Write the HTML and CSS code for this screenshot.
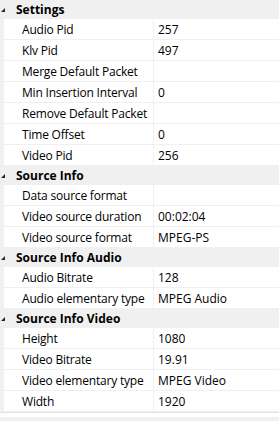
FILE: index.html
```html
<!DOCTYPE html>
<html lang="en">
  <head>
    <link rel="stylesheet" href="styles.css">
    <title>Properties</title>
  </head>
  <body>
    <div class="grid">
      <div class="category"><span class="arrow"></span>Settings</div>
      <div class="prop"><span class="name">Audio Pid</span><span class="value">257</span></div>
      <div class="prop"><span class="name">Klv Pid</span><span class="value">497</span></div>
      <div class="prop"><span class="name">Merge Default Packet</span><span class="value"></span></div>
      <div class="prop"><span class="name">Min Insertion Interval</span><span class="value">0</span></div>
      <div class="prop"><span class="name">Remove Default Packet</span><span class="value"></span></div>
      <div class="prop"><span class="name">Time Offset</span><span class="value">0</span></div>
      <div class="prop"><span class="name">Video Pid</span><span class="value">256</span></div>

      <div class="category"><span class="arrow"></span>Source Info</div>
      <div class="prop"><span class="name">Data source format</span><span class="value"></span></div>
      <div class="prop"><span class="name">Video source duration</span><span class="value">00:02:04</span></div>
      <div class="prop"><span class="name">Video source format</span><span class="value">MPEG-PS</span></div>

      <div class="category"><span class="arrow"></span>Source Info Audio</div>
      <div class="prop"><span class="name">Audio Bitrate</span><span class="value">128</span></div>
      <div class="prop"><span class="name">Audio elementary type</span><span class="value">MPEG Audio</span></div>

      <div class="category"><span class="arrow"></span>Source Info Video</div>
      <div class="prop"><span class="name">Height</span><span class="value">1080</span></div>
      <div class="prop"><span class="name">Video Bitrate</span><span class="value">19.91</span></div>
      <div class="prop"><span class="name">Video elementary type</span><span class="value">MPEG Video</span></div>
      <div class="prop"><span class="name">Width</span><span class="value">1920</span></div>
    </div>
    <div class="footer"></div>
  </body>
</html>
```
FILE: styles.css
```css
body {
  margin: 0;
  background: #ffffff;
  font-family: "Open Sans", sans-serif;
  font-size: 12px;
  color: #000000;
}

.grid {
  display: flex;
  flex-direction: column;
}

.category {
  height: 19px;
  line-height: 20px;
  background: #f0f0f0;
  font-weight: 700;
  padding-left: 16px;
  position: relative;
}

.arrow {
  position: absolute;
  left: 1px;
  top: 8px;
  width: 0;
  height: 0;
  border-left: 4px solid transparent;
  border-bottom: 4px solid #262626;
}

.prop {
  display: flex;
  height: 20px;
  line-height: 21px;
  border-bottom: 1px solid #f0f0f0;
  border-left: 4px solid #f0f0f0;
}

.name {
  width: 131px;
  padding-left: 18px;
  border-right: 1px solid #f0f0f0;
  white-space: nowrap;
  overflow: hidden;
  letter-spacing: -0.2px;
}

.value {
  flex: 1;
  padding-left: 4px;
}

.footer {
  height: 9px;
  border-top: 1px solid #e3e3e3;
  background: linear-gradient(#ffffff 0 4px, #f0f0f0 4px);
}
```
